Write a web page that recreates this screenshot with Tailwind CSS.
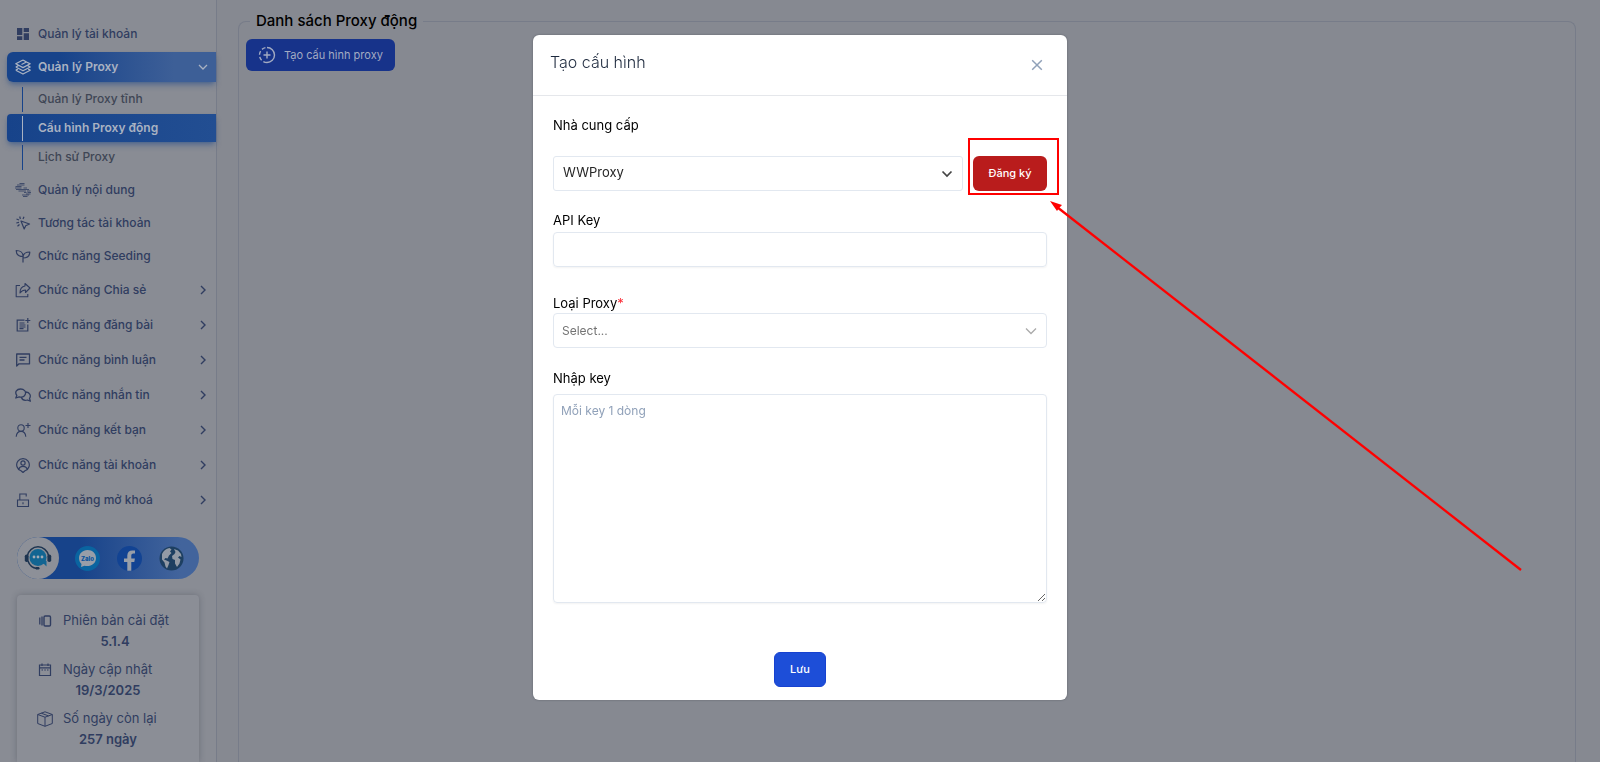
<!DOCTYPE html>
<html lang="vi">
<head>
<meta charset="utf-8">
<meta name="viewport" content="width=device-width, initial-scale=1">
<title>Cấu hình Proxy động</title>
<script src="https://cdn.jsdelivr.net/npm/@tailwindcss/browser@4"></script>
</head>
<body class="h-screen overflow-hidden bg-[#868991] font-['Inter','Noto_Sans',sans-serif] text-black">
<div class="flex h-full">
  <aside class="flex w-[217px] shrink-0 flex-col border-r border-[#777c89] bg-[#898c94] text-xs font-medium text-[#303d60]">
    <nav class="flex flex-col gap-1 pt-[19px]">
      <a href="#" class="flex h-[29px] items-center gap-[7px] pl-[15px]">
        <svg class="size-4" viewBox="0 0 16 16" fill="currentColor"><path d="M2 2h5.300v7H2zM8.700 2H14v4H8.700zM2 10.300h5.300V14H2zM8.700 7.300H14V14H8.700z"/></svg>
        Quản lý tài khoản</a>
      <div>
        <a href="#" class="ml-[7px] flex h-[30px] items-center gap-[7px] rounded-l-md bg-linear-to-r from-[#17438a] from-25% to-[#3d5f97] to-80% pr-[7px] pl-2 font-semibold text-[#a9b2c2] shadow-md shadow-[#17438a]/40">
          <svg class="size-4" viewBox="0 0 16 16" fill="none" stroke="currentColor" stroke-width="1.300" stroke-linejoin="round"><path d="M8 1 .8 4.800 8 8.600l7.200-3.800L11.500 3 6.500 5.500M8 1l3.500 2M.8 8 8 11.800 15.200 8l-2.500-1.300M.8 8l2.500-1.300M.8 11.200 8 15l7.200-3.800-2-1M.8 11.200l2-1"/></svg>
          Quản lý Proxy
          <svg class="ml-auto size-3" viewBox="0 0 12 12" fill="none" stroke="currentColor" stroke-width="1.300"><path d="m2 4 4 4 4-4"/></svg></a>
        <div class="mt-[3px] flex flex-col gap-px text-[#3f4655]">
          <a href="#" class="ml-[7px] flex h-7 items-center pl-[15px]"><span class="mr-[15px] h-[25px] w-px bg-[#17438a]"></span>Quản lý Proxy tĩnh</a>
          <a href="#" class="ml-[7px] flex h-7 items-center rounded-l-sm bg-linear-to-r from-[#17438a] to-[#224e92] pl-[15px] font-semibold text-[#a9b2c2] shadow-md shadow-[#17438a]/40"><span class="mr-[15px] h-[25px] w-px bg-[#a9b2c2]"></span>Cấu hình Proxy động</a>
          <a href="#" class="ml-[7px] flex h-7 items-center pl-[15px]"><span class="mr-[15px] h-[25px] w-px bg-[#17438a]"></span>Lịch sử Proxy</a>
        </div>
      </div>
      <a href="#" class="flex h-[29px] items-center gap-[7px] pl-[15px]">
        <svg class="size-4" viewBox="0 0 16 16" fill="none" stroke="currentColor" stroke-opacity=".8" stroke-width="1"><path d="M4.500 1.500h5M2 3h7.500M.5 4.500h6M0 6h6.500M1 7.500h9M3.500 9H11M9 10.500h2.500M7 13h4M8 14.500h4.500M8.500 6H12M10 7.500h4M12 9h3.500M12.500 10.500H16M11 12h4.500M11 13h3"/></svg>
        Quản lý nội dung</a>
      <a href="#" class="flex h-[29px] items-center gap-[7px] pl-[15px]">
        <svg class="size-4" viewBox="0 0 16 16" fill="none" stroke="currentColor" stroke-width="1.200" stroke-linejoin="round"><path d="m6 6 3.200 8 1.500-3.300L14.500 9zM4.700 1.500l.7 2.500M9 1.800 8 4M1.500 4l2.500 1M1.300 8l2.700-.6M2.500 11.300l2-1.800"/></svg>
        Tương tác tài khoản</a>
      <a href="#" class="flex h-[29px] items-center gap-[7px] pl-[15px]">
        <svg class="size-4" viewBox="0 0 16 16" fill="none" stroke="currentColor" stroke-width="1.200" stroke-linejoin="round"><path d="M8 14.500V8C8 4.500 5 2.500 1.200 2.500 1.200 6 3.500 8.500 8 8.500M8 9.500c0-3.500 2.500-5.500 6.800-5.500C14.800 7.500 12.500 10 8 10"/></svg>
        Chức năng Seeding</a>
      <a href="#" class="flex h-[31px] items-center gap-[7px] pr-[7px] pl-[15px]">
        <svg class="size-4" viewBox="0 0 16 16" fill="none" stroke="currentColor" stroke-width="1.100" stroke-linejoin="round"><path d="M5 3.500H1.200v11.300h11.600V12"/><path d="M10 1.500 15 6l-4.500 4.500V8C8 8 6.500 9 5 11c0-4 1.500-6.500 5-7z"/></svg>
        Chức năng Chia sẻ
        <svg class="ml-auto size-3" viewBox="0 0 12 12" fill="none" stroke="currentColor" stroke-width="1.400"><path d="m4 2 4 4-4 4"/></svg></a>
      <a href="#" class="flex h-[31px] items-center gap-[7px] pr-[7px] pl-[15px]">
        <svg class="size-4" viewBox="0 0 16 16" fill="none" stroke="currentColor" stroke-width="1.200"><path d="M9.500 3.200H2.200V14h10.600V7.500M12.800 1v5M10.300 3.500h5M4.500 6h5M4.500 8h6M4.500 10h6M4.500 11.700h4"/></svg>
        Chức năng đăng bài
        <svg class="ml-auto size-3" viewBox="0 0 12 12" fill="none" stroke="currentColor" stroke-width="1.400"><path d="m4 2 4 4-4 4"/></svg></a>
      <a href="#" class="flex h-[31px] items-center gap-[7px] pr-[7px] pl-[15px]">
        <svg class="size-4" viewBox="0 0 16 16" fill="none" stroke="currentColor" stroke-width="1.300" stroke-linejoin="round"><path d="M1.700 14V2h12.800v9.800H4zM4.500 5.300h7M4.500 8h5"/></svg>
        Chức năng bình luận
        <svg class="ml-auto size-3" viewBox="0 0 12 12" fill="none" stroke="currentColor" stroke-width="1.400"><path d="m4 2 4 4-4 4"/></svg></a>
      <a href="#" class="flex h-[31px] items-center gap-[7px] pr-[7px] pl-[15px]">
        <svg class="size-4" viewBox="0 0 16 16" fill="none" stroke="currentColor" stroke-width="1.300" stroke-linejoin="round"><path d="M1.800 8.500C-.8 5 2 2 5.500 2s6 2.500 4.700 5.500C9 10.300 6 10.300 4.200 9.800L.8 11zM11 5c3.500.2 5.500 3.500 3.500 6.500l.9 2.700-3-1.200c-2.400.7-4.900.2-6-2.500"/></svg>
        Chức năng nhắn tin
        <svg class="ml-auto size-3" viewBox="0 0 12 12" fill="none" stroke="currentColor" stroke-width="1.400"><path d="m4 2 4 4-4 4"/></svg></a>
      <a href="#" class="flex h-[31px] items-center gap-[7px] pr-[7px] pl-[15px]">
        <svg class="size-4" viewBox="0 0 16 16" fill="none" stroke="currentColor" stroke-width="1.100"><circle cx="6" cy="6" r="3.200"/><path d="M1.200 14.800c.3-3.600 2-5.400 4.800-5.400s4.500 1.800 4.800 5.400M13 1v5M10.500 3.500h5"/></svg>
        Chức năng kết bạn
        <svg class="ml-auto size-3" viewBox="0 0 12 12" fill="none" stroke="currentColor" stroke-width="1.400"><path d="m4 2 4 4-4 4"/></svg></a>
      <a href="#" class="flex h-[31px] items-center gap-[7px] pr-[7px] pl-[15px]">
        <svg class="size-4" viewBox="0 0 16 16" fill="none" stroke="currentColor" stroke-width="1.200" stroke-linejoin="round"><path d="M6 13.800a6.300 6.300 0 1 1 4 0L8 15.500zM3.800 12c.7-1.800 2.200-2.700 4.200-2.700s3.500.9 4.200 2.700"/><circle cx="8" cy="6" r="2.100"/></svg>
        Chức năng tài khoản
        <svg class="ml-auto size-3" viewBox="0 0 12 12" fill="none" stroke="currentColor" stroke-width="1.400"><path d="m4 2 4 4-4 4"/></svg></a>
      <a href="#" class="flex h-[31px] items-center gap-[7px] pr-[7px] pl-[15px]">
        <svg class="size-4" viewBox="0 0 16 16" fill="none" stroke="currentColor" stroke-width="1.100"><path d="M2.500 8h11v6.500h-11zM4.800 8V2h6.400v2.500M8 10.300v2"/></svg>
        Chức năng mở khoá
        <svg class="ml-auto size-3" viewBox="0 0 12 12" fill="none" stroke="currentColor" stroke-width="1.400"><path d="m4 2 4 4-4 4"/></svg></a>
    </nav>

    <div class="mx-[17px] mt-[22px] flex h-[42px] shrink-0 items-center rounded-full bg-linear-to-r from-[#17438a] from-35% to-[#42649c] to-90%">
      <a href="#" aria-label="Hỗ trợ" class="flex size-[42px] items-center justify-center rounded-full bg-[#8d9098]">
        <svg class="size-7" viewBox="0 0 28 28"><circle cx="14" cy="13.500" r="8.500" fill="#126592"/><path d="M17 17h5.500v5.500z" fill="#126592"/><path d="M3.500 11.500a10.700 10.700 0 0 1 21 0M4 17c1.500 4.500 4.500 7 9 7.500" fill="none" stroke="#1d3450" stroke-width="1.500"/><rect x=".8" y="10.500" width="3.800" height="7.500" rx="1.800" fill="#1d3450"/><rect x="23.400" y="10.500" width="3.800" height="7.500" rx="1.800" fill="#1d3450"/><rect x="11.500" y="23" width="4" height="2.500" rx="1.200" fill="#1d3450"/><g fill="#a3abb5"><circle cx="10" cy="13" r="1.400"/><circle cx="14" cy="13" r="1.400"/><circle cx="18" cy="13" r="1.400"/></g></svg></a>
      <div class="flex flex-1 items-center justify-between pr-[15px] pl-4">
        <a href="#" aria-label="Zalo"><svg class="size-[25px]" viewBox="0 0 25 25"><circle cx="12.500" cy="12.500" r="12.500" fill="#0a64a0"/><path d="M12.500 4C7.500 4 4 7.700 4 12c0 2.500 1 4.500 2.500 6L6 21l3.500-1.200C16 21 21 17.500 21 12c0-4.500-3.500-8-8.500-8z" fill="#989ea8"/><text x="12.500" y="14.500" text-anchor="middle" font-size="6" font-weight="800" fill="#0a519b">Zalo</text></svg></a>
        <a href="#" aria-label="Facebook"><svg class="size-[25px]" viewBox="0 0 25 25"><circle cx="12.500" cy="12.500" r="12.500" fill="#124393"/><path d="M10.300 24.800V16H7v-3.600h3.300V9.600c0-3.400 2-5.200 5-5.200 1.300 0 2.700.2 2.700.2v3h-1.600c-1.600 0-2.100 1-2.100 2v2.800h3.600L17.300 16h-3v8.800z" fill="#989ea8"/></svg></a>
        <a href="#" aria-label="Website"><svg class="size-[25px]" viewBox="0 0 25 25"><circle cx="12.500" cy="12.500" r="12" fill="#1d3f61"/><path d="M3 8c1.500-3.500 4-5.500 7.500-6l2 1.500-1.500 2 1.500 1.500-2.500 2.500-1.500 3-2-.5-1.500 1.500 2.500 1 3 1.500-1 3-1.500 3.500-1.500-2-1-4-2.500-3zM15 3l4 1.500 3 3.500.5 3-2-1-1.500 1.500 2.500 2-1 4-2.500 3.500-2-3.500V14l-2.500-1-.5-3 2.500-2 1-2z" fill="#929aa5"/></svg></a>
      </div>
    </div>

    <div class="mx-[17px] mt-4 flex-1 rounded-t bg-[#8b8e96] px-5 pt-4 text-[13px] font-normal shadow-[0_0_6px_rgba(40,45,60,0.3)]">
      <div class="flex h-5 items-center gap-[10px]">
        <svg class="size-4" viewBox="0 0 16 16" fill="none" stroke="currentColor" stroke-width="1.400"><rect x="7" y="3" width="6.500" height="10" rx="1.200"/><path d="M5 3.500v9M2.800 4.500v7" stroke-width="1.300"/></svg>Phiên bản cài đặt</div>
      <p class="mb-2 pl-[14px] text-center leading-[21px] font-semibold">5.1.4</p>
      <div class="flex h-5 items-center gap-[10px]">
        <svg class="size-4" viewBox="0 0 16 16" fill="none" stroke="currentColor" stroke-width="1.200"><path d="M2.500 3h11v10.500h-11zM2.500 5.800h11M5 1.500V4M11 1.500V4"/><path d="M4.500 8h1.500M7.300 8h1.500M10 8h1.500"/></svg>Ngày cập nhật</div>
      <p class="mb-2 text-center leading-[21px] font-semibold">19/3/2025</p>
      <div class="flex h-5 items-center gap-[10px]">
        <svg class="size-4" viewBox="0 0 16 16" fill="none" stroke="currentColor" stroke-width="1" stroke-linejoin="round"><path d="m8 .8 7.300 2.700v9L8 15.300.7 12.500v-9zM.7 3.500 8 6.200l7.300-2.700M8 6.200v9M4.300 2.200l7.200 2.700"/></svg>Số ngày còn lại</div>
      <p class="text-center leading-[21px] font-semibold">257 ngày</p>
    </div>
  </aside>

  <main class="flex min-w-0 flex-1 pt-[9px] pr-6 pl-[21px]">
    <fieldset class="h-full min-w-0 flex-1 rounded-t-lg border border-b-0 border-[#777c89] px-[7px]">
      <legend class="ml-1 px-[6px] text-[15px] leading-6 font-medium">Danh sách Proxy động</legend>
      <button type="button" class="mt-[6px] flex h-8 items-center gap-2 rounded-md bg-[#17338a] px-3 text-[11px] text-[#a3abc2]">
        <svg class="size-[18px]" viewBox="0 0 18 18" fill="none" stroke="currentColor" stroke-width="1.400"><path d="M9 1.500a7.500 7.500 0 0 1 0 15M9 5.500v7M5.500 9h7"/><path d="M9 16.500a7.500 7.500 0 0 1 0-15" stroke-dasharray="3.800 2.200"/></svg>
        Tạo cấu hình proxy</button>
    </fieldset>
  </main>
</div>

<div class="fixed inset-0 flex items-start justify-center pt-[35px]">
  <div role="dialog" aria-modal="true" aria-labelledby="dialog-title" class="w-full max-w-[534px] rounded-md bg-white shadow-[0_0_2px_rgba(60,65,75,0.6)]">
    <header class="flex h-[61px] items-center justify-between border-b border-gray-200 pr-[22px] pl-[17px]">
      <h2 id="dialog-title" class="pb-[6px] text-base font-light text-slate-800">Tạo cấu hình</h2>
      <button type="button" aria-label="Đóng" class="flex size-4 items-center justify-center text-slate-400"><svg class="size-3" viewBox="0 0 12 12" fill="none" stroke="currentColor" stroke-width="1.500"><path d="m1.200 1.200 9.600 9.600M10.800 1.200l-9.600 9.600"/></svg></button>
    </header>
    <form class="flex flex-col px-5 pt-[19px] pb-[13px] text-[13px]">
      <label for="provider" class="leading-5">Nhà cung cấp</label>
      <div class="mt-[21px] flex gap-[10px]">
        <div class="relative flex-1">
          <select id="provider" class="h-[35px] w-full appearance-none rounded-[3px] border border-slate-200 bg-white px-[9px] pb-px text-[13px] text-neutral-800"><option>WWProxy</option></select>
          <svg class="pointer-events-none absolute top-3 right-[10px] size-3" viewBox="0 0 12 12" fill="none" stroke="#444" stroke-width="1.700"><path d="m1.500 3.500 4.500 4.500 4.500-4.500"/></svg>
        </div>
        <div class="relative">
          <button type="button" class="h-[35px] w-[74px] rounded-md bg-[#b91c1c] pb-px text-[11px] font-medium text-white">Đăng ký</button>
          <div class="pointer-events-none absolute -top-[18px] -right-[12px] -bottom-1 -left-[5px] border-2 border-[#ff0000]"></div>
          <svg class="pointer-events-none absolute top-[44px] left-[76px] h-[374px] w-[474px]" viewBox="0 0 474 374" fill="none"><path d="m8 7 464 363" stroke="#ff0000" stroke-width="2.300"/><path d="M1 1l12 4-2.500 2.500L8 11z" fill="#ff0000"/></svg>
        </div>
      </div>
      <label for="api" class="mt-[19px] leading-5">API Key</label>
      <input id="api" type="text" class="mt-[2px] h-[35px] w-full rounded border border-slate-200 px-2 shadow-xs">
      <label for="type" class="mt-[26px] leading-5">Loại Proxy<span class="text-red-500">*</span></label>
      <div class="relative">
        <select id="type" class="block h-[35px] w-full appearance-none rounded border border-slate-200 bg-white px-2 text-xs text-neutral-500"><option>Select...</option></select>
        <svg class="pointer-events-none absolute top-3 right-[10px] size-3" viewBox="0 0 12 12" fill="none" stroke="#aaa" stroke-width="1.300"><path d="m1 3.500 5 5 5-5"/></svg>
      </div>
      <label for="keys" class="mt-5 leading-5">Nhập key</label>
      <textarea id="keys" placeholder="Mỗi key 1 dòng" class="mt-[6px] block h-[209px] w-full resize rounded border border-slate-200 px-[7px] py-2 text-xs text-slate-700 shadow-xs placeholder:text-slate-400"></textarea>
      <button type="submit" class="mt-[49px] h-[35px] w-[52px] self-center rounded-md border border-[#1742d0] bg-[#1d4ed8] pb-px text-[11px] font-medium text-white">Lưu</button>
    </form>
  </div>
</div>
</body>
</html>
